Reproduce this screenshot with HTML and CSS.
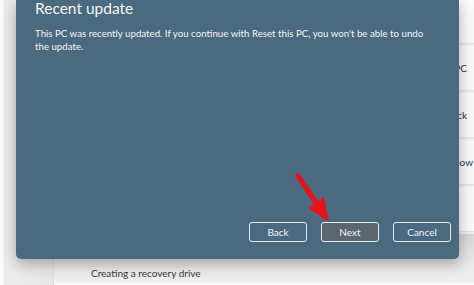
FILE: index.html
```html
<!DOCTYPE html>
<html>
<head>
<meta charset="utf-8">
<link rel="stylesheet" href="styles.css">
</head>
<body>
<div class="window">
  <div class="bg">
    <aside class="side"></aside>
    <main class="content">
      <div class="row top"></div>
      <div class="row"><span>Reset this PC</span><span class="act">Reset PC</span></div>
      <div class="row"><span>Go back</span><span class="act">Go back</span></div>
      <div class="row"><span>Advanced startup</span><span class="act wide">Restart now</span></div>
      <div class="row"><span>Related</span></div>
      <div class="row last"><span class="label">Creating a recovery drive</span></div>
    </main>
  </div>
  <div class="dialog">
    <h1 class="title">Recent update</h1>
    <p class="msg">This PC was recently updated. If you continue with Reset this PC, you won't be able to undo the update.</p>
    <div class="footer">
      <button class="btn">Back</button>
      <button class="btn primary">Next</button>
      <button class="btn">Cancel</button>
    </div>
  </div>
  <svg class="arrow" width="44" height="60" viewBox="0 0 44 60">
    <path d="M8 6 L27 34" stroke="#e5141c" stroke-width="5" stroke-linecap="round"/>
    <polygon points="39,52 34,27 18,38" fill="#e5141c"/>
  </svg>
</div>
</body>
</html>
```

FILE: styles.css
```css
html, body {
  margin: 0;
  padding: 0;
}
body {
  width: 474px;
  height: 285px;
  overflow: hidden;
  background: #f3f3f3;
  font-family: "Segoe UI", Lato, "Noto Sans", sans-serif;
}
.window {
  position: relative;
  width: 474px;
  height: 285px;
  overflow: hidden;
}
.bg {
  display: flex;
  height: 285px;
}
.side {
  width: 53px;
  flex: none;
  background: linear-gradient(to right, #fafafa 0, #fafafa 3px, #ececec 4px, #e6e6e6 100%);
  border-right: 1px solid #dcdcdc;
}
.content {
  flex: 1;
  display: flex;
  flex-direction: column;
  gap: 2px;
  background: #eeeeee;
  border-bottom: 2px solid #fafafa;
}
.row {
  height: 44px;
  flex: none;
  display: flex;
  align-items: center;
  justify-content: space-between;
  padding: 0 7px 0 37px;
  background: #f9f9f9;
  border-bottom: 1px solid #e2e2e2;
  font-size: 10px;
  color: #333;
  white-space: nowrap;
}
.row.top {
  height: 43px;
}
.act.wide {
  margin-right: -6px;
}
.row.last {
  flex: 1;
  height: auto;
  background: linear-gradient(to bottom, #d6d6d6, #e9e9e9 60%, #eeeeee);
  border-bottom: none;
  align-items: flex-end;
  padding-bottom: 4px;
}
.label {
  font-size: 10px;
  color: #3a3a3a;
}
.dialog {
  position: absolute;
  left: 16px;
  top: 0;
  width: 443px;
  height: 259px;
  box-sizing: border-box;
  background: #4b6a7f;
  border-radius: 0 0 5px 5px;
  box-shadow: 0 5px 14px rgba(0,0,0,0.3);
  padding: 0 8px 17px 19px;
  display: flex;
  flex-direction: column;
  color: #f2f5f7;
}
.title {
  margin: 0;
  font-size: 15.5px;
  font-weight: 400;
  line-height: 16px;
}
.msg {
  margin: 11px 0 0;
  font-size: 9.7px;
  line-height: 12.5px;
  width: 400px;
}
.footer {
  margin-top: auto;
  display: flex;
  justify-content: flex-end;
  gap: 14px;
}
.btn {
  width: 58px;
  height: 20px;
  box-sizing: border-box;
  border: 1.5px solid #e4ebef;
  border-radius: 3px;
  background: #4b6a7f;
  color: #f2f5f7;
  font-family: inherit;
  font-size: 10px;
  padding: 0;
}
.btn.primary {
  background: #5b6670;
}
.arrow {
  position: absolute;
  left: 290px;
  top: 170px;
}
```
